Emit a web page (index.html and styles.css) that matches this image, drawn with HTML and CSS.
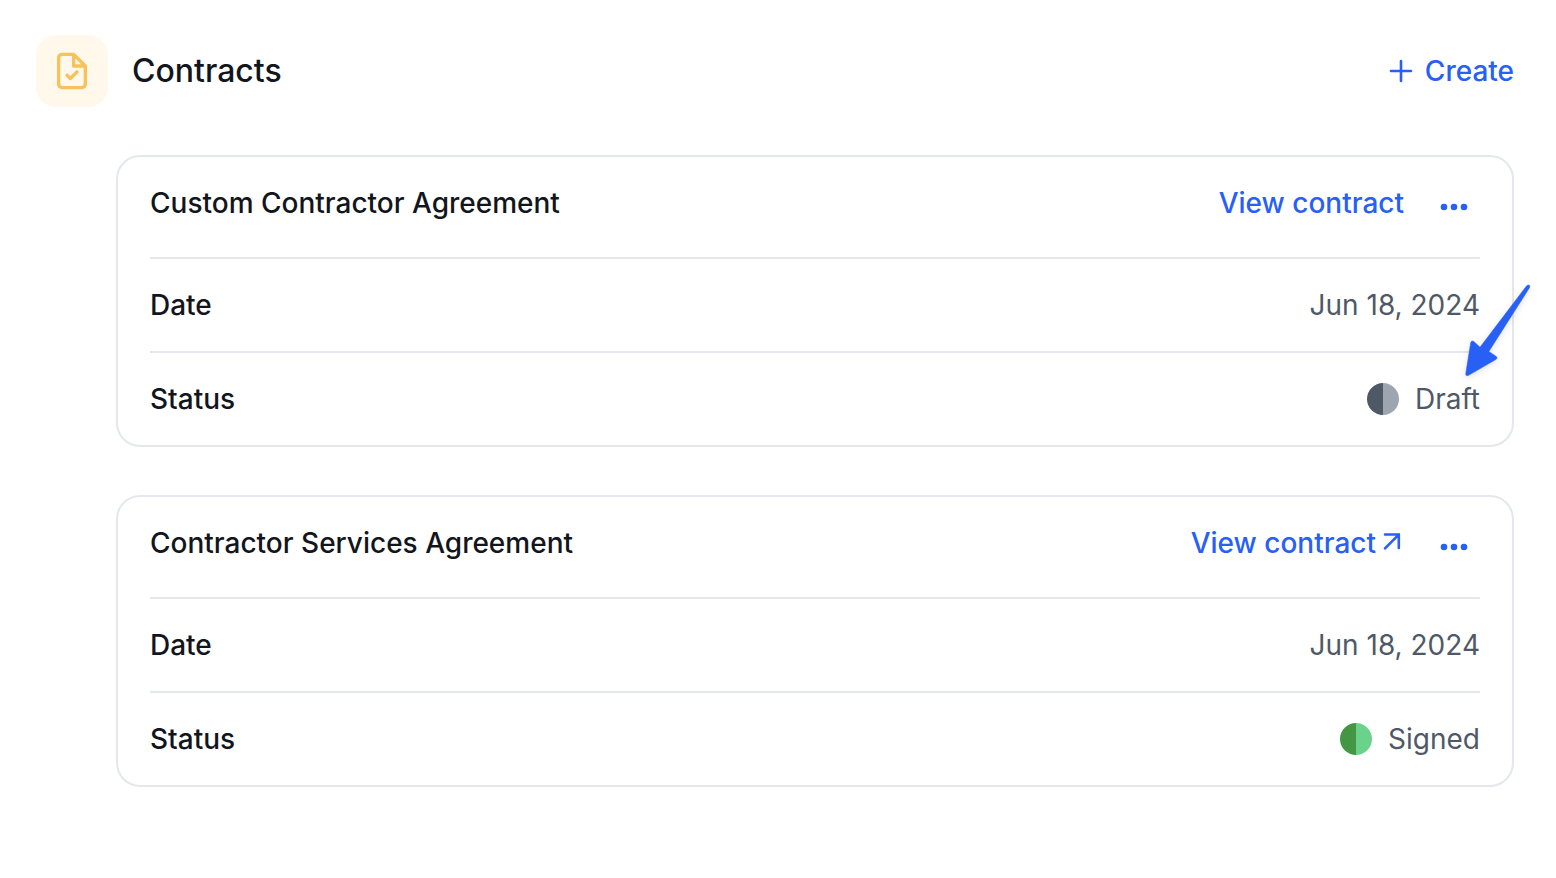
FILE: index.html
```html
<!DOCTYPE html>
<html lang="en">
<head>
	<meta charset="utf-8">
	<title>Contracts</title>
	<link rel="stylesheet" href="styles.css">
</head>
<body>
	<header class="top">
		<span class="tile">
			<svg class="doc" viewBox="0 0 24 24" aria-hidden="true">
				<path d="M13 2H6a2 2 0 0 0-2 2v16a2 2 0 0 0 2 2h12a2 2 0 0 0 2-2V9z M13 2v7h7 M9 14.5l2 2 4-4" />
			</svg>
		</span>
		<h1>Contracts</h1>
		<button type="button" class="link create">
			<svg class="plus" viewBox="0 0 24 24" aria-hidden="true"><path d="M12 2v20M2 12h20" /></svg>
			Create
		</button>
	</header>
	<main class="list">
		<section class="card">
			<div class="row head">
				<h2>Custom Contractor Agreement</h2>
				<a href="#" class="link">View contract</a>
				<button type="button" class="more" aria-label="More actions">
					<svg viewBox="0 0 28 8" aria-hidden="true"><circle cx="4" cy="4" r="3.3" /><circle cx="14" cy="4" r="3.3" /><circle cx="24" cy="4" r="3.3" /></svg>
				</button>
			</div>
			<div class="row">
				<span class="label">Date</span>
				<span class="value">Jun 18, 2024</span>
			</div>
			<div class="row">
				<span class="label">Status</span>
				<span class="value"><i class="dot draft"></i>Draft</span>
			</div>
			<svg class="arrow" viewBox="0 0 84 104" aria-hidden="true">
				<path d="M70.500 6Q72 4.300 73.300 5.200Q74.300 6 73.300 8L32.800 71.500L40.300 76.500Q42 78 40.200 79.300L12.500 95.300Q9.500 96.500 9.800 93.500L14.800 62.300Q15.800 60 17.800 61.500L24 67.300Z" />
			</svg>
		</section>
		<section class="card">
			<div class="row head">
				<h2>Contractor Services Agreement</h2>
				<a href="#" class="link">View contract<svg class="out" viewBox="0 0 28 28" aria-hidden="true"><path d="M9 5.500h13.800v13.500M22.500 5.800L9 19.300" /></svg></a>
				<button type="button" class="more" aria-label="More actions">
					<svg viewBox="0 0 28 8" aria-hidden="true"><circle cx="4" cy="4" r="3.3" /><circle cx="14" cy="4" r="3.3" /><circle cx="24" cy="4" r="3.3" /></svg>
				</button>
			</div>
			<div class="row">
				<span class="label">Date</span>
				<span class="value">Jun 18, 2024</span>
			</div>
			<div class="row">
				<span class="label">Status</span>
				<span class="value"><i class="dot signed"></i>Signed</span>
			</div>
		</section>
	</main>
</body>
</html>
```
FILE: styles.css
```css
body {
	margin: 0;
	padding: 35px 42px 35px 36px;
	font-family: Inter, sans-serif;
	font-size: 28px;
	line-height: 32px;
	color: #12161c;
	background-color: #fff;
}

h1, h2 {
	margin: 0;
	font-weight: 500;
}

h1 {
	font-size: 32px;
	line-height: 40px;
}

h2 {
	flex: 1;
	font-size: 28px;
}

svg {
	display: block;
	fill: none;
	stroke: currentColor;
}

.top {
	display: flex;
	align-items: center;
	gap: 24px;
}

.tile {
	display: flex;
	padding: 16px;
	border-radius: 20px;
	color: #f5c25b;
	background-color: #fff8eb;
}

.doc {
	width: 40px;
	height: 40px;
	stroke-width: 2;
	stroke-linejoin: round;
	stroke-linecap: round;
}

.link {
	display: flex;
	align-items: center;
	border: 0;
	padding: 0;
	font: inherit;
	font-weight: 500;
	color: #2860f6;
	background: none;
	text-decoration: none;
	cursor: pointer;
}

.create {
	gap: 12px;
	margin-left: auto;
}

.plus {
	width: 24px;
	height: 24px;
	stroke-width: 2.6;
	stroke-linecap: round;
}

.out {
	width: 28px;
	height: 28px;
	stroke-width: 2.6;
	stroke-linecap: round;
}

.list {
	display: grid;
	gap: 48px;
	padding: 48px 0 0 80px;
}

.card {
	position: relative;
	border: 2px solid #e4e8ec;
	border-radius: 24px;
	padding: 0 32px;
}

.row {
	display: flex;
	align-items: center;
	justify-content: space-between;
	padding: 30px 0;
}

	.row + .row {
		border-top: 2px solid #e4e8ec;
	}

.head {
	padding-bottom: 38px;
}

.label {
	font-weight: 500;
}

.value {
	display: flex;
	align-items: center;
	gap: 16px;
	color: #4f5966;
}

.more {
	border: 0;
	padding: 8px 12px 0;
	margin-left: 24px;
	color: #2860f6;
	background: none;
	cursor: pointer;
}

	.more svg {
		width: 28px;
		height: 8px;
		fill: currentColor;
		stroke: none;
	}

.dot {
	width: 32px;
	height: 32px;
	border-radius: 50%;
}

.draft {
	background: linear-gradient(90deg, #4f5966 50%, #9ca5b0 50%);
}

.signed {
	background: linear-gradient(90deg, #439644 50%, #6bd28b 50%);
}

/* pointer drawn over the status row */
.arrow {
	position: absolute;
	top: 123px;
	right: -28px;
	width: 84px;
	height: 104px;
	fill: #2860f6;
	stroke: #2860f6;
	stroke-width: 0.6;
	filter: drop-shadow(0 2px 3px rgba(0,0,0,0.12));
}
```
